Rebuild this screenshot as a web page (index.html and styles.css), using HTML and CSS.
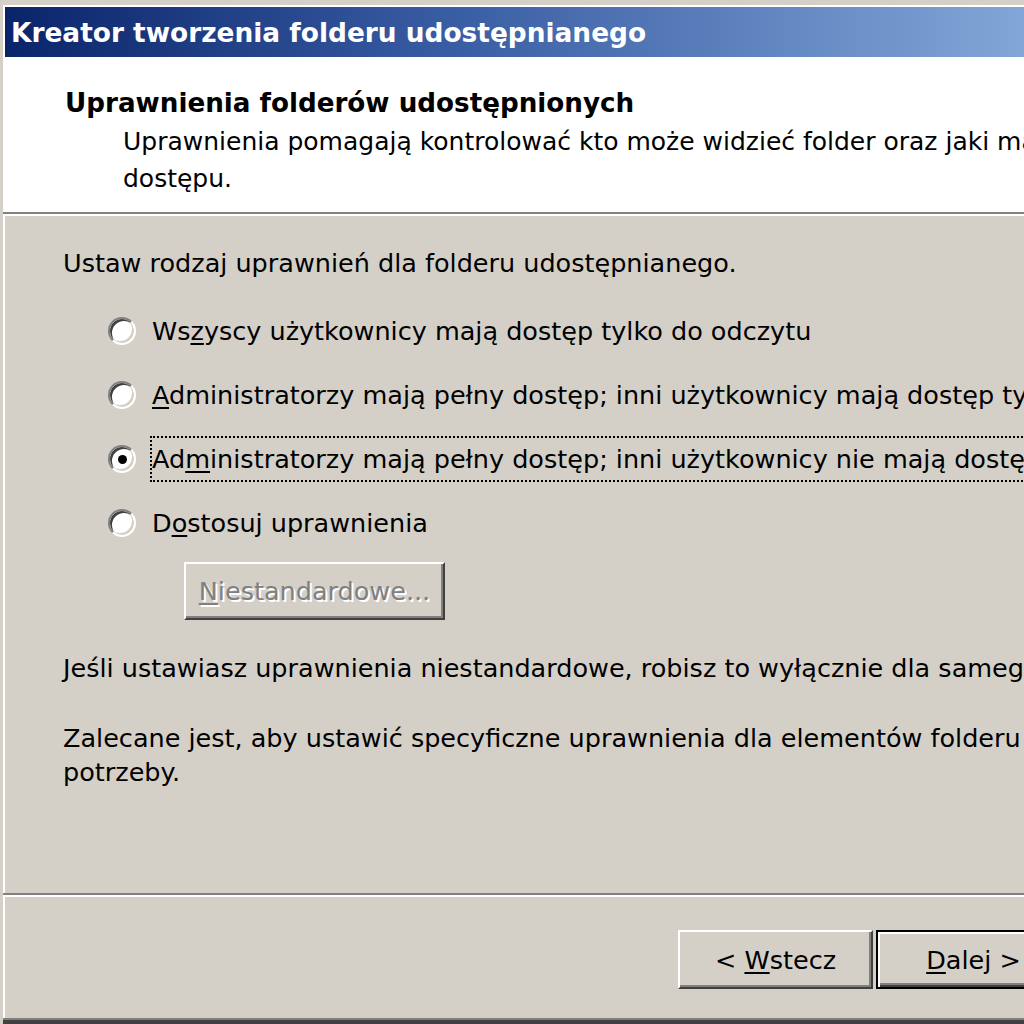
FILE: index.html
```html
<!DOCTYPE html>
<html lang="pl">
<head>
<meta charset="utf-8">
<title>Kreator tworzenia folderu udostępnianego</title>
<link rel="stylesheet" href="styles.css">
</head>
<body>
<div class="window">
  <div class="titlebar"><span class="title">Kreator tworzenia folderu udostępnianego</span></div>
  <div class="header">
    <h1 class="heading">Uprawnienia folderów udostępnionych</h1>
    <p class="subtitle">Uprawnienia pomagają kontrolować kto może widzieć folder oraz jaki mają rodzaj<br>dostępu.</p>
  </div>
  <div class="sep"></div>
  <div class="content">
    <p class="text first">Ustaw rodzaj uprawnień dla folderu udostępnianego.</p>
    <div class="options">
      <div class="opt"><span class="radio"></span><span class="label">Ws<u>z</u>yscy użytkownicy mają dostęp tylko do odczytu</span></div>
      <div class="opt"><span class="radio"></span><span class="label"><u>A</u>dministratorzy mają pełny dostęp; inni użytkownicy mają dostęp tylko do odczytu</span></div>
      <div class="opt"><span class="radio checked"></span><span class="label focus">Ad<u>m</u>inistratorzy mają pełny dostęp; inni użytkownicy nie mają dostępu</span></div>
      <div class="opt"><span class="radio"></span><span class="label">D<u>o</u>stosuj uprawnienia</span></div>
    </div>
    <div class="custom-row"><button class="btn disabled" disabled><span><u>N</u>iestandardowe...</span></button></div>
    <p class="text para1">Jeśli ustawiasz uprawnienia niestandardowe, robisz to wyłącznie dla samego folderu.</p>
    <p class="text para2">Zalecane jest, aby ustawić specyficzne uprawnienia dla elementów folderu w razie<br>potrzeby.</p>
  </div>
  <div class="sep"></div>
  <div class="buttons">
    <button class="btn"><span>&lt; <u>W</u>stecz</span></button>
    <button class="btn default"><span><u>D</u>alej &gt;</span></button>
    <button class="btn cancel"><span>Anuluj</span></button>
  </div>
  <div class="bottom-frame"></div>
</div>
</body>
</html>
```
FILE: styles.css
```css
html, body {
  margin: 0;
  padding: 0;
  width: 1024px;
  height: 1024px;
  overflow: hidden;
  background: #d4d0c8;
}

.window {
  width: 1305px;
  height: 1024px;
  box-sizing: border-box;
  display: flex;
  flex-direction: column;
  background: #d4d0c8;
  border-left: 3px solid #d4d0c8;
  border-top: 3px solid #d4d0c8;
  font-family: "DejaVu Sans", "Liberation Sans", sans-serif;
  font-size: 25.5px;
  color: #000;
}

.titlebar {
  height: 50px;
  margin-top: 4px;
  border-left: 2px solid #fff;
  box-shadow: 0 -2px 0 #fff;
  background: linear-gradient(to right, #0a246a 0%, #3a5ea4 35%, #a6caf0 100%);
  display: flex;
  align-items: center;
  padding-left: 6px;
  flex: none;
}

.title {
  color: #fff;
  font-weight: bold;
  font-size: 26.4px;
  white-space: nowrap;
}

.header {
  background: #fff;
  border-left: 2px solid #fff;
  height: 155px;
  flex: none;
  box-sizing: border-box;
  padding: 29px 0 0 60px;
}

.heading {
  margin: 0;
  font-size: 26.2px;
  font-weight: bold;
  line-height: 34px;
  white-space: nowrap;
}

.subtitle {
  margin: 3px 0 0 58px;
  font-size: 25px;
  line-height: 37px;
  white-space: nowrap;
}

.sep {
  height: 2px;
  flex: none;
  background: #808080;
  border-bottom: 2px solid #fff;
}

.content {
  flex: 1;
  border-left: 2px solid #fff;
  padding: 30px 0 0 58px;
}

.text {
  margin: 0;
  line-height: 34px;
  white-space: nowrap;
}

.options {
  margin: 29px 0 0 45px;
  display: flex;
  flex-direction: column;
  gap: 20px;
}

.opt {
  height: 44px;
  display: flex;
  align-items: center;
  white-space: nowrap;
}

.radio {
  width: 28px;
  height: 28px;
  box-sizing: border-box;
  border-radius: 50%;
  background: #fff;
  border: 2px solid;
  border-color: #808080 #ffffff #ffffff #808080;
  box-shadow: inset 2px 2px 0 #404040, inset -2px -2px 0 #d4d0c8;
  flex: none;
  display: flex;
  align-items: center;
  justify-content: center;
  margin-right: 14px;
}

.radio.checked::after {
  content: "";
  width: 9px;
  height: 9px;
  border-radius: 50%;
  background: #000;
}

.label {
  padding: 3px 0;
  line-height: 36px;
  border: 2px dotted transparent;
}

.label.focus {
  border-color: #000;
}

u {
  text-decoration: underline;
  text-underline-offset: 3px;
  text-decoration-thickness: 2px;
}

.custom-row {
  margin: 17px 0 0 121px;
}

.btn {
  font-family: inherit;
  font-size: 25.5px;
  color: #000;
  background: #d4d0c8;
  border: 2px solid;
  border-color: #ffffff #404040 #404040 #ffffff;
  box-shadow: inset -2px -2px 0 #808080;
  padding: 0;
  margin: 0;
  height: 59px;
  width: 195px;
  display: inline-flex;
  align-items: center;
  justify-content: center;
  white-space: nowrap;
  border-radius: 0;
}

.btn.disabled {
  width: 261px;
  height: 58px;
  color: #808080;
  text-shadow: 2px 2px 0 #ffffff;
}

.btn.default {
  border: 2px solid #000;
  box-shadow: inset 2px 2px 0 #ffffff, inset -2px -2px 0 #404040, inset -4px -4px 0 #808080;
}

.para1 {
  margin-top: 31px;
}

.para2 {
  margin-top: 36px;
}

.buttons {
  height: 121px;
  flex: none;
  box-sizing: border-box;
  padding: 33px 20px 0 0;
  border-left: 2px solid #fff;
  display: flex;
  align-items: flex-start;
  justify-content: flex-end;
  gap: 3px;
}

.btn.cancel {
  margin-left: 16px;
}

.bottom-frame {
  height: 4px;
  flex: none;
  background: #404040;
  border-top: 2px solid #808080;
}
```
